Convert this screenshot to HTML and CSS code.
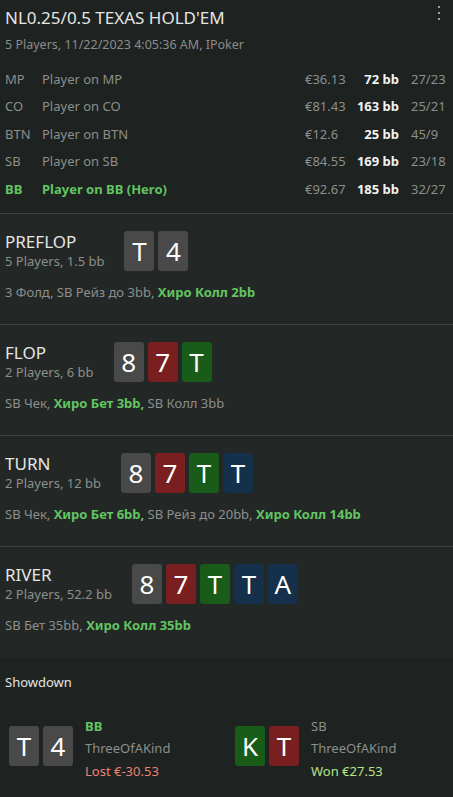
FILE: index.html
```html
<!DOCTYPE html>
<html lang="ru">
<head>
<meta charset="UTF-8" />
<meta name="viewport" content="width=device-width, initial-scale=1" />
<title>NL0.25/0.5 Texas Hold'em</title>
<link rel="stylesheet" href="styles.css">
</head>
<body>

<div class="hand-header">
  <div class="menu-dots"><span></span><span></span><span></span></div>
  <h1 class="title">NL0.25/0.5 TEXAS HOLD'EM</h1>
  <div class="subtitle">5 Players, 11/22/2023 4:05:36 AM, IPoker</div>

  <div class="players">
    <div class="player">
      <span class="pos">MP</span><span class="name">Player on MP</span>
      <span class="stack">€36.13</span><span class="bb">72 bb</span><span class="stats">27/23</span>
    </div>
    <div class="player">
      <span class="pos">CO</span><span class="name">Player on CO</span>
      <span class="stack">€81.43</span><span class="bb">163 bb</span><span class="stats">25/21</span>
    </div>
    <div class="player">
      <span class="pos">BTN</span><span class="name">Player on BTN</span>
      <span class="stack">€12.6</span><span class="bb">25 bb</span><span class="stats">45/9</span>
    </div>
    <div class="player">
      <span class="pos">SB</span><span class="name">Player on SB</span>
      <span class="stack">€84.55</span><span class="bb">169 bb</span><span class="stats">23/18</span>
    </div>
    <div class="player hero">
      <span class="pos">BB</span><span class="name">Player on BB (Hero)</span>
      <span class="stack">€92.67</span><span class="bb">185 bb</span><span class="stats">32/27</span>
    </div>
  </div>
</div>

<div class="street">
  <div class="street-top">
    <div class="street-info">
      <div class="street-name">PREFLOP</div>
      <div class="street-pot">5 Players, 1.5 bb</div>
    </div>
    <div class="cards">
      <span class="card gray">T</span><span class="card gray">4</span>
    </div>
  </div>
  <div class="actions">3 Фолд, SB Рейз до 3bb, <b class="hero-act">Хиро Колл 2bb</b></div>
</div>

<div class="street">
  <div class="street-top">
    <div class="street-info">
      <div class="street-name">FLOP</div>
      <div class="street-pot">2 Players, 6 bb</div>
    </div>
    <div class="cards">
      <span class="card gray">8</span><span class="card red">7</span><span class="card green">T</span>
    </div>
  </div>
  <div class="actions">SB Чек, <b class="hero-act">Хиро Бет 3bb,</b> SB Колл 3bb</div>
</div>

<div class="street">
  <div class="street-top">
    <div class="street-info">
      <div class="street-name">TURN</div>
      <div class="street-pot">2 Players, 12 bb</div>
    </div>
    <div class="cards">
      <span class="card gray">8</span><span class="card red">7</span><span class="card green">T</span><span class="card blue">T</span>
    </div>
  </div>
  <div class="actions">SB Чек, <b class="hero-act">Хиро Бет 6bb,</b> SB Рейз до 20bb, <b class="hero-act">Хиро Колл 14bb</b></div>
</div>

<div class="street last">
  <div class="street-top">
    <div class="street-info">
      <div class="street-name">RIVER</div>
      <div class="street-pot">2 Players, 52.2 bb</div>
    </div>
    <div class="cards">
      <span class="card gray">8</span><span class="card red">7</span><span class="card green">T</span><span class="card blue">T</span><span class="card blue">A</span>
    </div>
  </div>
  <div class="actions">SB Бет 35bb, <b class="hero-act">Хиро Колл 35bb</b></div>
</div>

<div class="showdown">
  <div class="showdown-title">Showdown</div>
  <div class="showdown-hands">
    <div class="sd-hand">
      <div class="cards">
        <span class="card gray">T</span><span class="card gray">4</span>
      </div>
      <div class="sd-info">
        <div class="sd-pos hero-act">BB</div>
        <div class="sd-combo">ThreeOfAKind</div>
        <div class="sd-result lost">Lost €-30.53</div>
      </div>
    </div>
    <div class="sd-hand">
      <div class="cards">
        <span class="card green">K</span><span class="card red">T</span>
      </div>
      <div class="sd-info">
        <div class="sd-pos">SB</div>
        <div class="sd-combo">ThreeOfAKind</div>
        <div class="sd-result won">Won €27.53</div>
      </div>
    </div>
  </div>
</div>

</body>
</html>
```

FILE: styles.css
```css
body {
  margin: 0;
  background: #1e2220;
  font-family: 'Noto Sans', 'Open Sans', sans-serif;
  color: #8c8f8d;
  font-size: 13px;
  width: 453px;
}
.hand-header {
  position: relative;
  padding: 5px 5px 10px 5px;
  background: #1e2220;
  border-bottom: 1px solid #3d423f;
}
.menu-dots {
  position: absolute;
  top: 6px;
  right: 13px;
  display: flex;
  flex-direction: column;
  gap: 4px;
}
.menu-dots span {
  width: 2px;
  height: 2px;
  background: #9a9d9b;
}
.title {
  margin: 0;
  font-size: 17px;
  font-weight: normal;
  color: #e4e6e5;
  line-height: 26px;
}
.subtitle {
  margin-top: 4px;
  line-height: 20px;
  font-size: 12.5px;
  color: #8a8d8b;
}
.players {
  margin-top: 10px;
}
.player {
  display: flex;
  align-items: center;
  height: 27.5px;
  white-space: nowrap;
}
.pos {
  width: 37px;
}
.name {
  flex: 1;
}
.stack {
  width: 50px;
}
.bb {
  width: 44px;
  text-align: right;
  color: #f2f3f2;
  font-weight: bold;
}
.stats {
  width: 37px;
  margin-left: 12px;
}
.player.hero .pos,
.player.hero .name {
  color: #62c462;
  font-weight: bold;
}
.street {
  background: #232826;
  height: 111px;
  padding: 17px 5px 0 5px;
  box-sizing: border-box;
  border-bottom: 1px solid #3d423f;
}
.street.last {
  border-bottom: none;
}
.street-top {
  display: flex;
  align-items: center;
  gap: 20px;
}
.street-name {
  font-size: 17px;
  color: #e4e6e5;
  line-height: 21px;
}
.street-pot {
  line-height: 18px;
}
.cards {
  display: flex;
  gap: 4px;
}
.card {
  width: 30px;
  height: 40px;
  border-radius: 3px;
  display: flex;
  align-items: center;
  justify-content: center;
  font-size: 26px;
  color: #ffffff;
}
.card.gray { background: #494949; }
.card.red { background: #7a1f1f; }
.card.green { background: #195b19; }
.card.blue { background: #14304b; }
.actions {
  margin-top: 12px;
  line-height: 18px;
}
.hero-act {
  color: #62c462;
  font-weight: bold;
}
.showdown {
  background: #1e2220;
  padding: 14px 5px 0 5px;
  height: 140px;
  box-sizing: border-box;
}
.showdown-title {
  color: #e4e6e5;
  line-height: 20px;
}
.showdown-hands {
  display: grid;
  grid-template-columns: 226px 1fr;
  padding-left: 4px;
  margin-top: 19px;
}
.sd-hand {
  display: flex;
  align-items: center;
  gap: 12px;
}
.sd-info {
  padding-top: 4px;
}
.sd-info div {
  line-height: 22.5px;
}
.sd-result.lost { color: #e8847a; }
.sd-result.won { color: #b6e38c; }
```
